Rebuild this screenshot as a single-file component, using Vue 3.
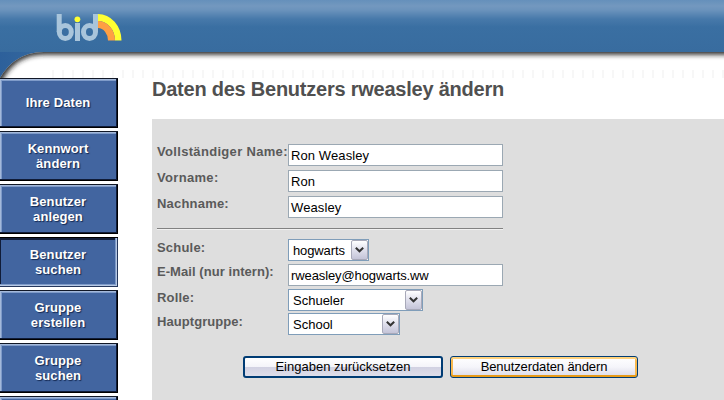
<script setup>
const nav = [
  { lines: ['Ihre Daten'] },
  { lines: ['Kennwort', 'ändern'] },
  { lines: ['Benutzer', 'anlegen'] },
  { lines: ['Benutzer', 'suchen'], active: true },
  { lines: ['Gruppe', 'erstellen'] },
  { lines: ['Gruppe', 'suchen'] },
  { lines: [] },
]
</script>

<template>
  <div class="page">
    <header class="header">
      <svg class="corner" width="724" height="30" viewBox="0 0 724 30">
        <defs>
          <clipPath id="sheet"><path d="M0 26C8 12 22 0 44 0H724V30H0Z" /></clipPath>
          <filter id="soft" filterUnits="userSpaceOnUse" x="-40" y="-40" width="820" height="110"><feGaussianBlur stdDeviation="2.4" /></filter>
          <linearGradient id="side" x1="0" y1="0" x2="1" y2="0">
            <stop offset="0" stop-color="#2d609b" />
            <stop offset="1" stop-color="#386c9f" />
          </linearGradient>
        </defs>
        <rect width="60" height="26" fill="url(#side)" />
        <g clip-path="url(#sheet)">
          <rect width="724" height="30" fill="#fff" />
          <path d="M-14 50L0 26C8 12 22 0 44 0H760" transform="translate(0 -1)" fill="none" stroke="#222" stroke-width="7" filter="url(#soft)" />
        </g>
      </svg>
      <div class="ticks"></div>
      <svg class="logo" width="67" height="30" viewBox="0 0 67 30" fill="none">
        <path d="M3.200 1V19M21.500 10V28M39.500 1V19" stroke="#a9c5db" stroke-width="5" />
        <ellipse cx="9.300" cy="19" rx="6" ry="6.600" stroke="#a9c5db" stroke-width="5" />
        <ellipse cx="33.500" cy="19" rx="6" ry="6.600" stroke="#a9c5db" stroke-width="5" />
        <path d="M42 1A23.500 26.500 0 0 1 65.500 27.500H59A17 19.500 0 0 0 42 8Z" fill="#ffff32" />
        <path d="M42 8A17 19.500 0 0 1 59 27.500H52A10 12.500 0 0 0 42 15Z" fill="#ff9f43" />
        <circle cx="21.400" cy="6.300" r="2.900" fill="#ffff32" />
      </svg>
    </header>
    <div class="body">
      <nav class="nav">
        <a v-for="(item, i) in nav" :key="i" class="tab" :class="{ active: item.active }">
          <span v-for="line in item.lines" :key="line">{{ line }}</span>
        </a>
      </nav>
      <main class="main">
        <h1>Daten des Benutzers rweasley ändern</h1>
        <section class="panel">
          <div class="form">
            <label class="wide">Vollständiger Name:</label><div class="input">Ron Weasley</div>
            <label class="wide">Vorname:</label><div class="input">Ron</div>
            <label>Nachname:</label><div class="input">Weasley</div>
            <div class="rule"></div>
            <label class="low">Schule:</label>
            <div class="select school"><span>hogwarts</span><i><svg width="9" height="6" viewBox="0 0 9 6"><path d="M.8 .8L4.500 4.300L8.200 .8" /></svg></i></div>
            <label class="tight">E-Mail (nur intern):</label><div class="input mail">rweasley@hogwarts.ww</div>
            <label class="low">Rolle:</label>
            <div class="select role"><span>Schueler</span><i><svg width="9" height="6" viewBox="0 0 9 6"><path d="M.8 .8L4.500 4.300L8.200 .8" /></svg></i></div>
            <label class="low tight">Hauptgruppe:</label>
            <div class="select group"><span>School</span><i><svg width="9" height="6" viewBox="0 0 9 6"><path d="M.8 .8L4.500 4.300L8.200 .8" /></svg></i></div>
          </div>
          <div class="actions">
            <button class="reset">Eingaben zurücksetzen</button>
            <button class="submit">Benutzerdaten ändern</button>
          </div>
        </section>
      </main>
    </div>
  </div>
</template>

<style>
body { margin: 0; overflow: hidden; }
</style>

<style scoped>
* { box-sizing: border-box; }
.page { width: 724px; height: 400px; overflow: hidden; background: #fff; font-family: "Liberation Sans", Arial, sans-serif; }
.header { position: relative; height: 78px; background: linear-gradient(#6590bb 0, #7398bf 6px, #6b93bc 10px, #4779aa 19px, #3a6fa2 27px, #386c9f 52px); }
.corner { position: absolute; left: 0; top: 52px; }
.ticks { position: absolute; left: 52px; right: 0; top: 70px; height: 8px; background: repeating-linear-gradient(90deg, #f7f7f7 0, #f7f7f7 2px, #fff 2px, #fff 10px); }
.logo { position: absolute; left: 56px; top: 13px; }
.body { display: flex; height: 322px; position: relative; }
.nav { width: 152px; flex: none; display: flex; flex-direction: column; gap: 3px; }
.tab { flex: none; width: 118px; height: 50px; display: flex; flex-direction: column; align-items: center; justify-content: center; padding-right: 2px; background: #4265a0; color: #fff; font-weight: bold; font-size: 13px; line-height: 15.5px; letter-spacing: .1px; text-shadow: 1px 1px 1px #142850; box-shadow: inset 0 1px #111827, inset -1px -1px #000, inset -2px -2px #101c38, inset 1px 2px #a4b9da, inset 2px 3px #7f9bc9; }
.tab.active { box-shadow: inset 0 1px #000, inset -1px -1px #24365c, inset -2px -2px #b6c8e4, inset -3px -3px #7f9bc9, inset 1px 3px #101c38; }
.main { flex: 1; display: flex; flex-direction: column; }
h1 { margin: 0; height: 41px; font-size: 20px; line-height: 23px; letter-spacing: -.235px; color: #505050; white-space: nowrap; }
.panel { flex: 1; background: #dedede; padding: 25px 0 0 5px; }
.form { display: grid; grid-template-columns: 131px 215px; grid-template-rows: 26px 26px 26px 17px 25px 25px 24px 24px; align-items: start; }
label { font-size: 13px; line-height: 15px; font-weight: bold; letter-spacing: .2px; color: #5a5a5a; white-space: nowrap; }
.wide { letter-spacing: .32px; }
.tight { letter-spacing: .06px; }
.low { padding-top: 1px; }
.input { height: 22px; border: 1px solid #9ba8b3; background: #fff; font-size: 13px; line-height: 22px; padding-left: 2px; letter-spacing: .1px; color: #000; white-space: nowrap; }
.mail { letter-spacing: -.1px; }
.rule { grid-column: 1 / 3; margin-top: 6px; height: 2px; border-top: 1px solid #818181; border-bottom: 1px solid #f1f1f1; }
.select { height: 22px; border: 1px solid #7f9db9; background: #fff; display: flex; justify-content: space-between; font-size: 13px; line-height: 22px; padding-left: 4px; color: #000; }
.select i { width: 17px; height: 20px; border: 1px solid #a8a9b9; border-radius: 2px; background: linear-gradient(#fff, #e2e2ee 45%, #c4c4d8); display: flex; align-items: center; justify-content: center; }
.select path { fill: none; stroke: #333; stroke-width: 2; }
.school { width: 81px; letter-spacing: -.12px; }
.role { width: 135px; }
.group { width: 112px; }
.actions { display: flex; gap: 7px; margin: 19px 0 0 86px; }
button { height: 22px; padding: 0; border: 2px solid #003c74; border-radius: 3px; font: 13px/18px "Liberation Sans", Arial, sans-serif; letter-spacing: 0; color: #000; background: linear-gradient(#fff 0, #f4f4f9 50%, #d2d2e2 52%, #dedeea 100%); white-space: nowrap; }
.reset { width: 200px; }
.submit { width: 188px; border-width: 1px; letter-spacing: -.1px; background: linear-gradient(#fff, #f5f5fa 50%, #d9d9e7); box-shadow: inset 0 2px #ffd27d, inset 0 -2px #e69a18, inset 2px 0 #f8b94f, inset -2px 0 #f8b94f; }
</style>
